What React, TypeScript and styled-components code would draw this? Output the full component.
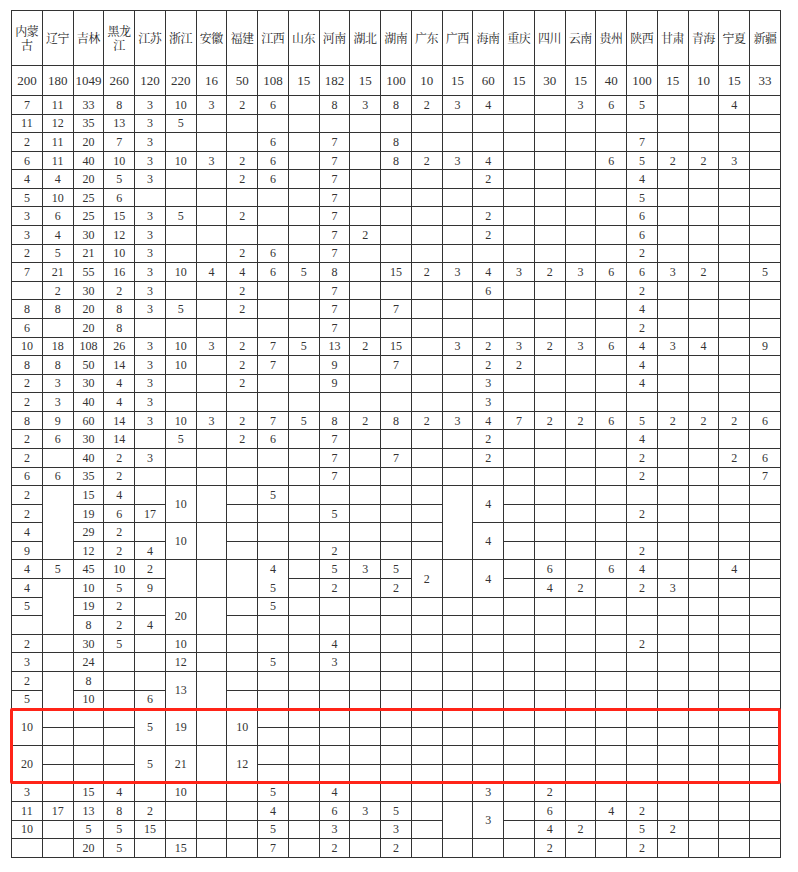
import React from "react";
import styled, { createGlobalStyle } from "styled-components";

const GlobalStyle = createGlobalStyle`
    body {
        margin: 0;
        background: #fff;
    }
`;

const HEAD_H = 55;
const TOTAL_H = 30;
const ROW_H = 18.585;

const provinces = [
    "内蒙古", "辽宁", "吉林", "黑龙江", "江苏", "浙江", "安徽", "福建", "江西",
    "山东", "河南", "湖北", "湖南", "广东", "广西", "海南", "重庆", "四川",
    "云南", "贵州", "陕西", "甘肃", "青海", "宁夏", "新疆",
];

const totals = [
    200, 180, 1049, 260, 120, 220, 16, 50, 108, 15, 182, 15, 100, 10, 15, 60,
    15, 30, 15, 40, 100, 15, 10, 15, 33,
];

// "col:value" pairs, 1-based columns. "^" = merged with the cell above,
// a trailing "!" = no line under that cell.
const rows = [
    "1:7 2:11 3:33 4:8 5:3 6:10 7:3 8:2 9:6 11:8 12:3 13:8 14:2 15:3 16:4 19:3 20:6 21:5 24:4",
    "1:11 2:12 3:35 4:13 5:3 6:5",
    "1:2 2:11 3:20 4:7 5:3 9:6 11:7 13:8 21:7",
    "1:6 2:11 3:40 4:10 5:3 6:10 7:3 8:2 9:6 11:7 13:8 14:2 15:3 16:4 20:6 21:5 22:2 23:2 24:3",
    "1:4 2:4 3:20 4:5 5:3 8:2 9:6 11:7 16:2 21:4",
    "1:5 2:10 3:25 4:6 11:7 21:5",
    "1:3 2:6 3:25 4:15 5:3 6:5 8:2 11:7 16:2 21:6",
    "1:3 2:4 3:30 4:12 5:3 11:7 12:2 16:2 21:6",
    "1:2 2:5 3:21 4:10 5:3 8:2 9:6 11:7 21:2",
    "1:7 2:21 3:55 4:16 5:3 6:10 7:4 8:4 9:6 10:5 11:8 13:15 14:2 15:3 16:4 17:3 18:2 19:3 20:6 21:6 22:3 23:2 25:5",
    "2:2 3:30 4:2 5:3 8:2 11:7 16:6 21:2",
    "1:8 2:8 3:20 4:8 5:3 6:5 8:2 11:7 13:7 21:4",
    "1:6 3:20 4:8 11:7 21:2",
    "1:10 2:18 3:108 4:26 5:3 6:10 7:3 8:2 9:7 10:5 11:13 12:2 13:15 15:3 16:2 17:3 18:2 19:3 20:6 21:4 22:3 23:4 25:9",
    "1:8 2:8 3:50 4:14 5:3 6:10 8:2 9:7 11:9 13:7 16:2 17:2 21:4",
    "1:2 2:3 3:30 4:4 5:3 8:2 11:9 16:3 21:4",
    "1:2 2:3 3:40 4:4 5:3 16:3",
    "1:8 2:9 3:60 4:14 5:3 6:10 7:3 8:2 9:7 10:5 11:8 12:2 13:8 14:2 15:3 16:4 17:7 18:2 19:2 20:6 21:5 22:2 23:2 24:2 25:6",
    "1:2 2:6 3:30 4:14 6:5 8:2 9:6 11:7 16:2 21:4",
    "1:2 3:40 4:2 5:3 11:7 13:7 16:2 21:2 24:2 25:6",
    "1:6 2:6 3:35 4:2 11:7 21:2 25:7",
    "1:2 3:15 4:4 6:10 9:5 16:4",
    "1:2 2:^ 3:19 4:6 5:17 6:^ 7:^ 11:5 15:^ 16:^ 21:2",
    "1:4 2:^ 3:29 4:2 6:10 15:^ 16:4",
    "1:9 2:^ 3:12 4:2 5:4 6:^ 7:^ 11:2 15:^ 16:^ 21:2",
    "1:4 2:5 3:45 4:10 5:2 9:4! 11:5 12:3 13:5 14:2 16:4 18:6 20:6 21:4 24:4",
    "1:4 3:10 4:5 5:9 6:^ 7:^ 8:^ 9:5 11:2 13:2 14:^ 15:^ 16:^ 18:4 19:2 21:2 22:3",
    "1:5 2:^ 3:19 4:2 6:20 9:5",
    "2:^ 3:8 4:2 5:4 6:^ 7:^",
    "1:2 3:30 4:5 6:10 11:4 21:2",
    "1:3 3:24 6:12 9:5 11:3",
    "1:2 3:8 6:13",
    "1:5 2:^ 3:10 5:6 6:^ 7:^",
    "1:10 5:5 6:19 8:10",
    "1:^ 5:^ 6:^ 7:^ 8:^",
    "1:20 5:5 6:21 8:12",
    "1:^ 5:^ 6:^ 7:^ 8:^",
    "1:3 3:15 4:4 6:10 9:5 11:4 16:3 18:2",
    "1:11 2:17 3:13 4:8 5:2 9:4 11:6 12:3 13:5 16:3 18:6 20:4 21:2",
    "1:10 3:5 4:5 5:15 9:5 11:3 13:3 15:^ 16:^ 18:4 19:2 21:5 22:2",
    "3:20 4:5 6:15 9:7 11:2 13:2 18:2 21:2",
];

const grid: string[][] = rows.map((line) => {
    const row = new Array(provinces.length).fill("");
    line.split(" ").forEach((pair) => {
        const [col, value] = pair.split(":");
        row[Number(col) - 1] = value;
    });
    return row;
});

const Page = styled.div`
    padding: 10px 0 0 11px;
`;

const Frame = styled.div`
    position: relative;
    display: inline-block;
`;

const Sheet = styled.table`
    border-collapse: collapse;
    table-layout: fixed;
    width: 770px;
    font-family: "Liberation Serif", "Noto Serif CJK SC", "Noto Sans CJK SC", serif;
    color: #333;
`;

const HeadRow = styled.tr`
    height: ${HEAD_H}px;
`;

const TotalRow = styled.tr`
    height: ${TOTAL_H}px;
`;

const DataRow = styled.tr`
    height: ${ROW_H}px;
`;

const HeadCell = styled.th`
    border: 1px solid #333;
    padding: 0 1px;
    font-family: "Noto Serif CJK SC", "Noto Sans CJK SC", serif;
    font-size: 12px;
    font-weight: 400;
    line-height: 14px;
    letter-spacing: -0.5px;
    color: #262626;
    text-align: center;
    vertical-align: middle;
`;

const TotalCell = styled.td`
    border: 1px solid #333;
    padding: 0;
    font-size: 13px;
    text-align: center;
    vertical-align: middle;
`;

const Cell = styled.td<{ $open?: boolean }>`
    border: 1px solid #333;
    padding: 0;
    font-size: 12px;
    line-height: 14px;
    text-align: center;
    vertical-align: middle;
    ${(p) => p.$open && "border-bottom-style: hidden;"}
`;

const Highlight = styled.div`
    position: absolute;
    left: -1px;
    width: 771px;
    border: 3px solid #ff2418;
    border-radius: 2px;
    box-sizing: border-box;
    pointer-events: none;
`;

const App: React.FC = () => {
    const boxTop = HEAD_H + TOTAL_H + 33 * ROW_H - 0.6;

    return (
        <Page>
            <GlobalStyle />
            <Frame>
                <Sheet>
                    <thead>
                        <HeadRow>
                            {provinces.map((name) => (
                                <HeadCell key={name}>{name}</HeadCell>
                            ))}
                        </HeadRow>
                    </thead>
                    <tbody>
                        <TotalRow>
                            {totals.map((n, i) => (
                                <TotalCell key={i}>{n}</TotalCell>
                            ))}
                        </TotalRow>
                        {grid.map((row, r) => (
                            <DataRow key={r}>
                                {row.map((token, c) => {
                                    if (token === "^") return null;
                                    let span = 1;
                                    while (grid[r + span]?.[c] === "^") span++;
                                    const open = token.endsWith("!");
                                    return (
                                        <Cell key={c} rowSpan={span} $open={open}>
                                            {token.replace("!", "")}
                                        </Cell>
                                    );
                                })}
                            </DataRow>
                        ))}
                    </tbody>
                </Sheet>
                <Highlight style={{ top: boxTop, height: 4 * ROW_H + 2.3 }} />
            </Frame>
        </Page>
    );
};

export default App;
